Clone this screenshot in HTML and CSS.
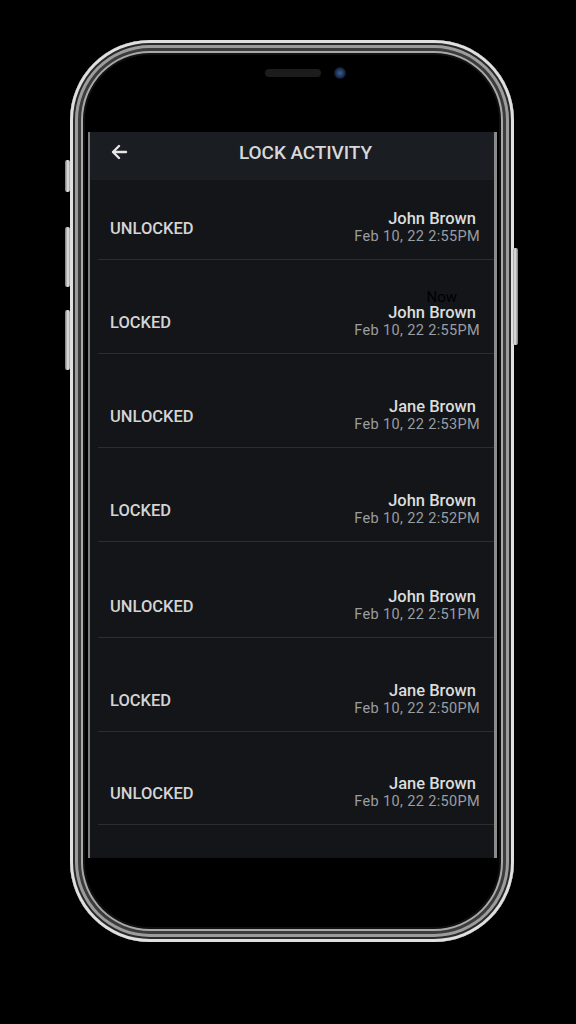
FILE: index.html
```html
<!DOCTYPE html>
<html lang="en">
<head>
<meta charset="utf-8">
<title>Lock Activity</title>
<link rel="stylesheet" href="styles.css">
</head>
<body>
<div class="stage">
  <div class="phone">
    <span class="btn btn-l1"></span>
    <span class="btn btn-l2"></span>
    <span class="btn btn-l3"></span>
    <span class="btn btn-r1"></span>
    <div class="top">
      <span class="speaker"></span>
      <span class="camera"></span>
    </div>
    <div class="screen">
      <div class="header">
        <svg class="back" width="18" height="18" viewBox="0 0 18 18" fill="none" stroke="#e6e6e6" stroke-width="2.4" stroke-linecap="round" stroke-linejoin="round"><path d="M16 9H3M9 3L3 9l6 6"/></svg>
        <div class="title">LOCK ACTIVITY</div>
      </div>
      <div class="list">
        <div class="row first">
          <div class="status">UNLOCKED</div>
          <div class="meta"><div class="name">John Brown</div><div class="date">Feb 10, 22 2:55PM</div></div>
        </div>
        <div class="row">
          <div class="status">LOCKED</div>
          <div class="meta"><div class="now">Now</div><div class="name">John Brown</div><div class="date">Feb 10, 22 2:55PM</div></div>
        </div>
        <div class="row">
          <div class="status">UNLOCKED</div>
          <div class="meta"><div class="name">Jane Brown</div><div class="date">Feb 10, 22 2:53PM</div></div>
        </div>
        <div class="row">
          <div class="status">LOCKED</div>
          <div class="meta"><div class="name">John Brown</div><div class="date">Feb 10, 22 2:52PM</div></div>
        </div>
        <div class="row tall">
          <div class="status">UNLOCKED</div>
          <div class="meta"><div class="name">John Brown</div><div class="date">Feb 10, 22 2:51PM</div></div>
        </div>
        <div class="row">
          <div class="status">LOCKED</div>
          <div class="meta"><div class="name">Jane Brown</div><div class="date">Feb 10, 22 2:50PM</div></div>
        </div>
        <div class="row short">
          <div class="status">UNLOCKED</div>
          <div class="meta"><div class="name">Jane Brown</div><div class="date">Feb 10, 22 2:50PM</div></div>
        </div>
      </div>
    </div>
  </div>
</div>
</body>
</html>
```
FILE: styles.css
```css
* { box-sizing: border-box; }
html, body { margin: 0; padding: 0; background: #000; }
body { width: 576px; height: 1024px; overflow: hidden; font-family: Roboto, "Liberation Sans", sans-serif; }

.stage { padding: 40px 0 0 70px; }

.phone {
  position: relative;
  width: 444px;
  height: 902px;
  border-radius: 80px;
  background: #000;
  box-shadow:
    inset 0 0 0 3px #e0e0e0,
    inset 0 0 0 5px #2a2a2a,
    inset 0 0 0 8px #9c9c9c,
    inset 0 0 0 11px #3c3c3c,
    inset 0 0 0 13px #a8a8a8,
    inset 0 0 0 15px #111;
  padding: 0 17px 0 18px;
}

.btn { position: absolute; width: 5px; background: linear-gradient(90deg, #777, #e8e8e8 60%, #999); border-radius: 2px; }
.btn-l1 { left: -5px; top: 120px; height: 32px; }
.btn-l2 { left: -5px; top: 187px; height: 60px; }
.btn-l3 { left: -5px; top: 270px; height: 60px; }
.btn-r1 { right: -4px; top: 208px; height: 97px; background: linear-gradient(90deg, #999, #e8e8e8 40%, #777); }

.top {
  height: 92px;
  padding: 29px 0 0 25px;
  display: flex;
  justify-content: center;
  align-items: flex-start;
  gap: 13px;
}
.speaker { width: 56px; height: 8px; border-radius: 4px; background: #1c1c1c; }
.camera {
  width: 12px; height: 12px; border-radius: 50%; margin-top: -2px;
  background: radial-gradient(circle at 50% 50%, #3a5f96 0, #1e3558 45%, #0d1524 70%, #2a2a2a 100%);
}

.screen {
  width: 409px;
  height: 726px;
  background: #131519;
  border-left: 2px solid #7c7c7c;
  border-right: 3px solid #8a8a8a;
  overflow: hidden;
}

.header {
  height: 48px;
  background: #1a1d21;
  display: flex;
  align-items: center;
  padding: 0 0 8px 20px;
}
.back { display: block; flex: none; }
.title {
  flex: 1;
  text-align: center;
  padding-right: 11px;
  color: #d8d8d8;
  font-size: 19px;
  font-weight: 500;
  letter-spacing: -0.1px;
}

.row {
  height: 94px;
  margin-left: 8px;
  border-bottom: 1px solid #2a2d31;
  display: flex;
  justify-content: space-between;
  align-items: flex-end;
  padding: 0 14px 13px 12px;
}
.row.first { height: 80px; }
.row.tall { height: 96px; }
.row.short { height: 93px; }

.status {
  color: #d4d4d4;
  font-size: 16.5px;
  font-weight: 500;
  line-height: 20px;
  margin-bottom: 7px;
}
.meta { text-align: right; }
.name { color: #dcdcdc; font-size: 16.5px; font-weight: 500; line-height: 19px; padding-right: 4px; }
.date { color: #9a9da1; font-size: 14.5px; line-height: 18px; letter-spacing: 0.35px; }
.now {
  color: #000;
  font-size: 15px;
  line-height: 12px;
  padding-right: 23px;
}
```
